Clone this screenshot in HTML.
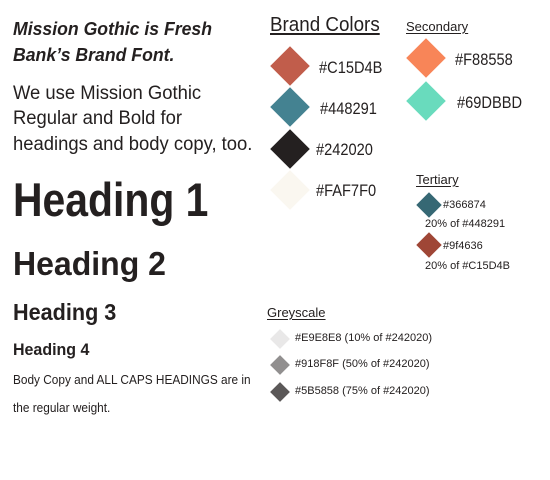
<!DOCTYPE html>
<html><head><meta charset="utf-8"><style>
body{margin:0;width:550px;height:480px;background:#fff;position:relative;overflow:hidden;font-family:"Liberation Sans",sans-serif;color:#242020}
.t{position:absolute;white-space:nowrap;line-height:1;transform:scaleX(.86);transform-origin:left center}
.d{position:absolute;transform:rotate(45deg)}
.u{text-decoration:underline;text-underline-offset:2px}
.s{transform:none}
</style></head><body>
<div class="t" style="left:13px;top:20px;font-size:18px;font-weight:bold;font-style:italic;transform:scaleX(.98)">Mission Gothic is Fresh</div>
<div class="t" style="left:13px;top:46px;font-size:18px;font-weight:bold;font-style:italic;transform:scaleX(.98)">Bank’s Brand Font.</div>
<div class="t" style="left:13px;top:84px;font-size:19px;transform:scaleX(.97)">We use Mission Gothic</div>
<div class="t" style="left:13px;top:109px;font-size:19px;transform:scaleX(.97)">Regular and Bold for</div>
<div class="t" style="left:13px;top:135px;font-size:19px;transform:scaleX(.97)">headings and body copy, too.</div>
<div class="t" style="left:13px;top:176px;font-size:47px;font-weight:bold;transform:scaleX(.87)">Heading 1</div>
<div class="t" style="left:13px;top:247px;font-size:33px;font-weight:bold;transform:scaleX(.97)">Heading 2</div>
<div class="t" style="left:13px;top:301px;font-size:23px;font-weight:bold;transform:scaleX(.94)">Heading 3</div>
<div class="t" style="left:13px;top:341px;font-size:17px;font-weight:bold;transform:scaleX(.94)">Heading 4</div>
<div class="t" style="left:13px;top:373px;font-size:13px;transform:scaleX(.91)">Body Copy and ALL CAPS HEADINGS are in</div>
<div class="t" style="left:13px;top:401px;font-size:13px;transform:scaleX(.91)">the regular weight.</div>

<div class="t u" style="left:270px;top:15px;font-size:20px;transform:scaleX(.94)">Brand Colors</div>
<div class="d" style="left:276px;top:52px;width:28px;height:28px;background:#C15D4B"></div>
<div class="d" style="left:276px;top:93px;width:28px;height:28px;background:#448291"></div>
<div class="d" style="left:276px;top:135px;width:28px;height:28px;background:#242020"></div>
<div class="d" style="left:276px;top:176px;width:28px;height:28px;background:#FAF7F0"></div>
<div class="t" style="left:319px;top:59px;font-size:17px">#C15D4B</div>
<div class="t" style="left:320px;top:100px;font-size:17px">#448291</div>
<div class="t" style="left:316px;top:141px;font-size:17px">#242020</div>
<div class="t" style="left:316px;top:182px;font-size:17px">#FAF7F0</div>

<div class="t u s" style="left:406px;top:20px;font-size:13px">Secondary</div>
<div class="d" style="left:412px;top:44px;width:28px;height:28px;background:#F88558"></div>
<div class="d" style="left:412px;top:87px;width:28px;height:28px;background:#69DBBD"></div>
<div class="t" style="left:455px;top:51px;font-size:17px">#F88558</div>
<div class="t" style="left:457px;top:94px;font-size:17px">#69DBBD</div>

<div class="t u s" style="left:416px;top:173px;font-size:13px">Tertiary</div>
<div class="d" style="left:420px;top:196px;width:18px;height:18px;background:#366874"></div>
<div class="d" style="left:420px;top:236px;width:18px;height:18px;background:#9f4636"></div>
<div class="t s" style="left:443px;top:200px;font-size:11px">#366874</div>
<div class="t s" style="left:425px;top:219px;font-size:11px">20% of #448291</div>
<div class="t s" style="left:443px;top:241px;font-size:11px">#9f4636</div>
<div class="t s" style="left:425px;top:261px;font-size:11px">20% of #C15D4B</div>

<div class="t u s" style="left:267px;top:306px;font-size:13px">Greyscale</div>
<div class="d" style="left:273px;top:332px;width:14px;height:14px;background:#E9E8E8"></div>
<div class="d" style="left:273px;top:358px;width:14px;height:14px;background:#918F8F"></div>
<div class="d" style="left:273px;top:385px;width:14px;height:14px;background:#5B5858"></div>
<div class="t s" style="left:295px;top:333px;font-size:11px">#E9E8E8 (10% of #242020)</div>
<div class="t s" style="left:295px;top:359px;font-size:11px">#918F8F (50% of #242020)</div>
<div class="t s" style="left:295px;top:386px;font-size:11px">#5B5858 (75% of #242020)</div>
</body></html>
